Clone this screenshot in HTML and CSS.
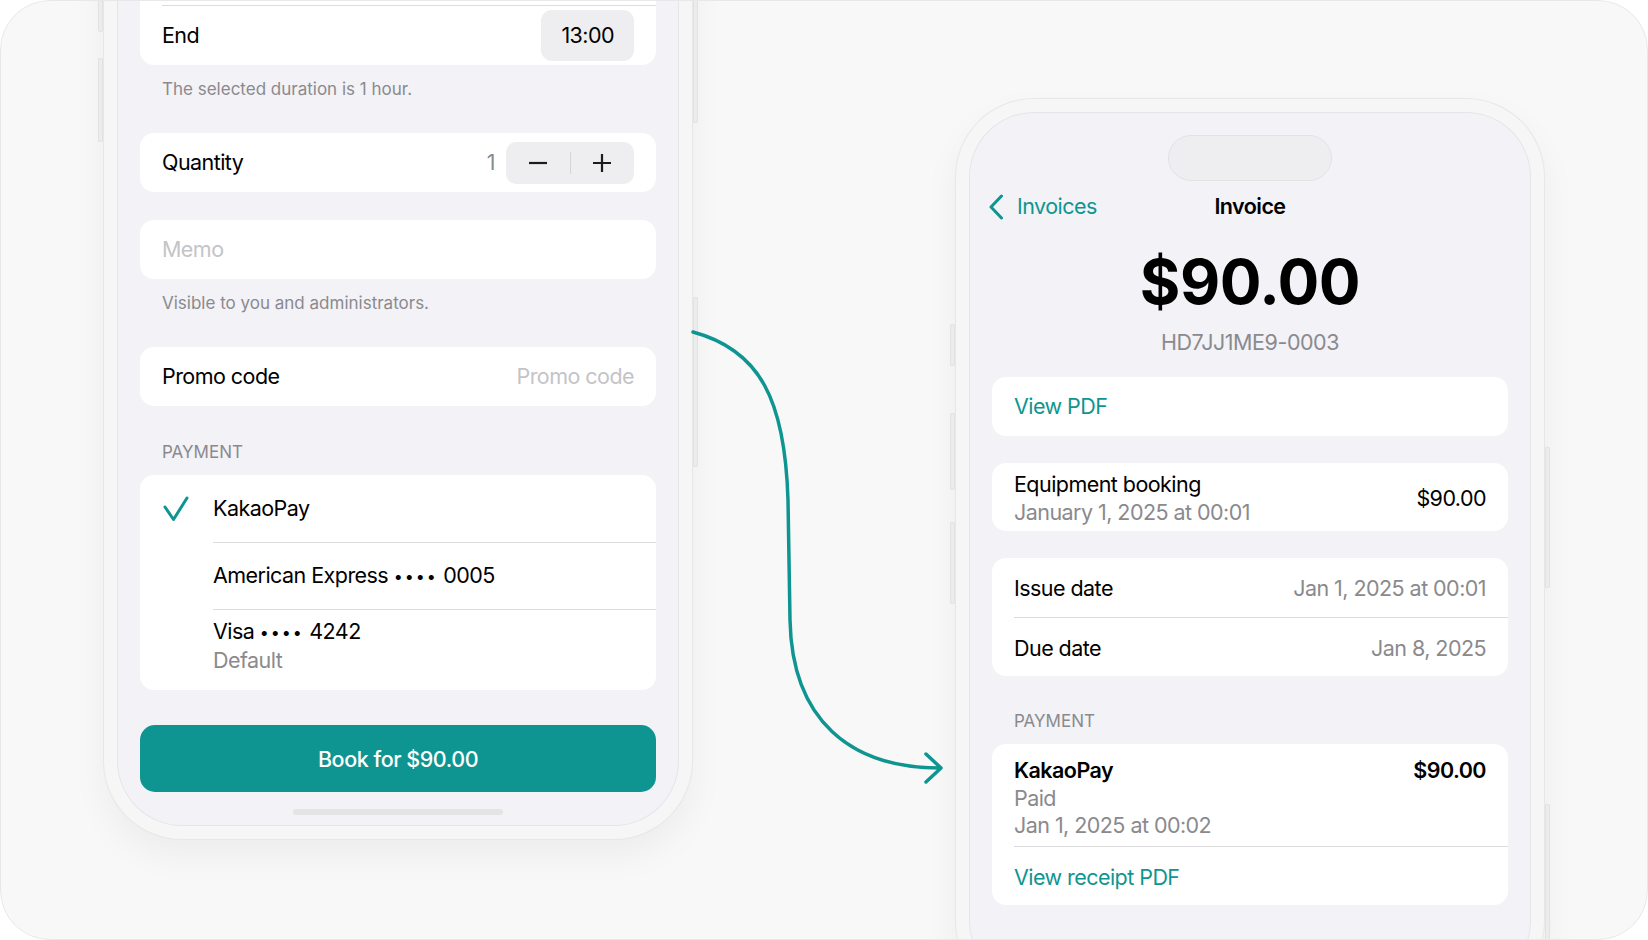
FILE: index.html
```html
<!DOCTYPE html>
<html lang="en">
<head>
    <meta charset="UTF-8">
    <meta name="viewport" content="width=device-width, initial-scale=1.0">
    <title>Booking and Invoice</title>
    <link rel="stylesheet" href="styles.css">
</head>
<body>
    <div class="frame">
        <!-- booking form -->
        <div class="phone phone-left">
            <span class="side-key on-left" style="top: 41px; height: 80px;"></span>
            <span class="side-key on-left" style="top: 147px; height: 84px;"></span>
            <span class="side-key on-right" style="top: 41px; height: 171px;"></span>
            <span class="side-key on-right" style="top: 386px; height: 170px;"></span>
            <div class="screen screen-left">
                <div class="group">
                    <div class="row row-time"></div>
                    <div class="row row-time">
                        <span class="label">End</span>
                        <span class="pill label">13:00</span>
                    </div>
                </div>
                <p class="footnote">The selected duration is 1 hour.</p>

                <div class="group">
                    <div class="row">
                        <span class="label">Quantity</span>
                        <div class="qty">
                            <span class="label muted">1</span>
                            <div class="stepper">
                                <span class="step">
                                    <svg width="20" height="20" viewBox="0 0 20 20"><path d="M1 10H19"/></svg>
                                </span>
                                <span class="step-divider"></span>
                                <span class="step">
                                    <svg width="20" height="20" viewBox="0 0 20 20"><path d="M10 1V19M1 10H19"/></svg>
                                </span>
                            </div>
                        </div>
                    </div>
                </div>
                <div class="group">
                    <div class="row">
                        <span class="label placeholder">Memo</span>
                    </div>
                </div>
                <p class="footnote">Visible to you and administrators.</p>

                <div class="group">
                    <div class="row">
                        <span class="label">Promo code</span>
                        <span class="label placeholder">Promo code</span>
                    </div>
                </div>

                <p class="section-title">Payment</p>
                <div class="group">
                    <div class="pay-row">
                        <span class="pay-check">
                            <svg width="27" height="26" viewBox="0 0 27 26"><path d="M3 11L11.5 23.5L25 2"/></svg>
                        </span>
                        <div class="pay-body"><span class="label">KakaoPay</span></div>
                    </div>
                    <div class="pay-row">
                        <span class="pay-check"></span>
                        <div class="pay-body"><span class="label">American Express <span class="dots">••••</span> 0005</span></div>
                    </div>
                    <div class="pay-row pay-row-tall">
                        <span class="pay-check"></span>
                        <div class="pay-body">
                            <span class="label">Visa <span class="dots">••••</span> 4242</span>
                            <span class="label muted">Default</span>
                        </div>
                    </div>
                </div>

                <div class="book-btn">Book for $90.00</div>
                <div class="home-bar"></div>
            </div>
        </div>

        <!-- invoice -->
        <div class="phone phone-right">
            <span class="side-key on-left" style="top: 225px; height: 42px;"></span>
            <span class="side-key on-left" style="top: 314px; height: 77px;"></span>
            <span class="side-key on-left" style="top: 423px; height: 82px;"></span>
            <span class="side-key on-right" style="top: 348px; height: 141px;"></span>
            <span class="side-key on-right" style="top: 705px; height: 200px;"></span>
            <div class="screen screen-right">
                <div class="island"></div>
                <div class="nav">
                    <span class="nav-back">
                        <svg width="16" height="26" viewBox="0 0 16 26"><path d="M13.5 2L3 13L13.5 24"/></svg>
                        <span class="label">Invoices</span>
                    </span>
                    <span class="label nav-title">Invoice</span>
                    <span></span>
                </div>
                <div class="amount">$90.00</div>
                <div class="invoice-id">HD7JJ1ME9-0003</div>

                <div class="group">
                    <div class="row">
                        <span class="label link">View PDF</span>
                    </div>
                </div>
                <div class="group">
                    <div class="row row-detail">
                        <div class="lines">
                            <span class="label">Equipment booking</span>
                            <span class="label muted">January 1, 2025 at 00:01</span>
                        </div>
                        <span class="label">$90.00</span>
                    </div>
                </div>
                <div class="group">
                    <div class="row row-first">
                        <span class="label">Issue date</span>
                        <span class="label muted">Jan 1, 2025 at 00:01</span>
                    </div>
                    <div class="row row-low">
                        <span class="label">Due date</span>
                        <span class="label muted">Jan 8, 2025</span>
                    </div>
                </div>

                <p class="section-title">Payment</p>
                <div class="group">
                    <div class="row row-payment">
                        <div class="lines">
                            <span class="label strong">KakaoPay</span>
                            <span class="label muted">Paid</span>
                            <span class="label muted">Jan 1, 2025 at 00:02</span>
                        </div>
                        <span class="label strong">$90.00</span>
                    </div>
                    <div class="row row-low">
                        <span class="label link">View receipt PDF</span>
                    </div>
                </div>
            </div>
        </div>

        <svg class="arrow" width="1648" height="940" viewBox="0 0 1648 940">
            <path d="M693 332C760 350 785 400 788 500L790 620C792 720 850 768 940 768"/>
            <path d="M926 754L941 768L926 782"/>
        </svg>
    </div>
</body>
</html>
```

FILE: styles.css
```css
* {
    box-sizing: border-box;
}
body {
    margin: 0;
    background: #ffffff;
    font-family: "Inter", "Liberation Sans", sans-serif;
    color: #000000;
}
.frame {
    position: relative;
    display: flex;
    align-items: flex-start;
    width: 1648px;
    height: 940px;
    overflow: hidden;
    background: #f8f8f8;
    border-radius: 50px;
}
.frame::after {
    content: "";
    position: absolute;
    inset: 0;
    border: 1px solid #e8e8e8;
    border-radius: 50px;
    pointer-events: none;
}

/* phone body */
.phone {
    position: relative;
    flex: none;
    width: 588px;
    padding: 14px;
    background: #f6f6f6;
    border-radius: 78px;
    box-shadow: 0 0 0 1px #e7e7e7, 0 16px 36px rgba(0, 0, 0, 0.05);
}
.phone-left {
    height: 928px;
    margin: -89px 0 0 104px;
}
.phone-right {
    height: 900px;
    margin: 99px 0 0 264px;
}
.side-key {
    position: absolute;
    width: 5px;
    background: #ececec;
    border-radius: 2px;
    box-shadow: inset 0 0 0 1px #e2e2e2;
}
.side-key.on-left {
    left: -6px;
}
.side-key.on-right {
    right: -6px;
}
.screen {
    display: flex;
    flex-direction: column;
    height: 100%;
    padding: 0 22px;
    background: #f2f2f7;
    border-radius: 64px;
    box-shadow: 0 0 0 1px #e5e5e8;
    overflow: hidden;
}
.screen-left {
    justify-content: flex-end;
    padding-bottom: 10px;
}
.screen-right {
    padding-top: 22px;
}

/* text */
.label {
    font-size: 21.5px;
    line-height: 27.5px;
    letter-spacing: -0.55px;
    white-space: nowrap;
}
.muted {
    color: #8a8a8e;
}
.placeholder {
    color: #c4c4c7;
}
.link {
    color: #0e9591;
}
.strong {
    font-weight: 600;
}
.dots {
    font-size: 16px;
    letter-spacing: 2px;
    vertical-align: 1px;
}
.footnote,
.section-title {
    flex: none;
    margin: 13px 22px 0;
    font-size: 17px;
    line-height: 22px;
    color: #8a8a8e;
}
.section-title {
    margin-top: 35px;
    text-transform: uppercase;
}

/* grouped lists */
.group {
    flex: none;
    background: #ffffff;
    border-radius: 14px;
}
.group + .group {
    margin-top: 28px;
}
.footnote + .group {
    margin-top: 33px;
}
.section-title + .group {
    margin-top: 12px;
}
.row {
    display: flex;
    align-items: center;
    justify-content: space-between;
    min-height: 59px;
    margin-left: 22px;
    padding-right: 22px;
}
.row + .row {
    border-top: 1px solid #dcdcdf;
}
.row-time {
    min-height: 60px;
}
.row-first {
    padding-top: 2px;
}
.row-low {
    padding-top: 4px;
}
.pill {
    display: flex;
    align-items: center;
    height: 51px;
    padding: 0 20px;
    background: #eeeef0;
    border-radius: 11px;
}
.qty {
    display: flex;
    align-items: center;
    gap: 11px;
}
.stepper {
    display: flex;
    align-items: center;
    height: 42px;
    background: #eeeef0;
    border-radius: 10px;
}
.step {
    display: flex;
    align-items: center;
    justify-content: center;
    width: 63.5px;
    height: 100%;
}
.step svg {
    fill: none;
    stroke: #1c1c1e;
    stroke-width: 2.2;
}
.step-divider {
    width: 1px;
    height: 22px;
    background: #d4d4d8;
}

/* payment choices */
.pay-row {
    display: flex;
    min-height: 67px;
    padding-left: 22px;
}
.pay-check {
    flex: none;
    display: flex;
    align-items: center;
    width: 51px;
}
.pay-check svg {
    fill: none;
    stroke: #0e9591;
    stroke-width: 3;
    stroke-linecap: round;
    stroke-linejoin: round;
}
.pay-body {
    flex: 1;
    display: flex;
    flex-direction: column;
    justify-content: center;
    padding-right: 22px;
}
.pay-row + .pay-row .pay-body {
    border-top: 1px solid #dcdcdf;
}
.pay-row-tall {
    min-height: 81px;
}
.pay-row-tall .pay-body {
    justify-content: flex-start;
    padding-top: 8px;
}
.book-btn {
    flex: none;
    display: flex;
    align-items: center;
    justify-content: center;
    height: 67px;
    margin-top: 35px;
    background: #0e9591;
    border-radius: 15px;
    color: #ffffff;
    font-size: 21.5px;
    font-weight: 500;
    letter-spacing: -0.45px;
}
.home-bar {
    flex: none;
    align-self: center;
    width: 210px;
    height: 6px;
    margin-top: 17px;
    background: #e4e4e4;
    border-radius: 3px;
}

/* invoice screen */
.island {
    flex: none;
    align-self: center;
    width: 164px;
    height: 46px;
    background: #eeeef0;
    border: 1px solid #e2e2e5;
    border-radius: 23px;
}
.nav {
    flex: none;
    display: grid;
    grid-template-columns: 1fr auto 1fr;
    align-items: center;
    height: 46px;
    margin: 3px -22px 0;
    padding: 0 18px;
}
.nav-back {
    display: flex;
    align-items: center;
    gap: 13px;
    color: #0e9591;
}
.nav-back svg {
    fill: none;
    stroke: #0e9591;
    stroke-width: 3;
    stroke-linecap: round;
    stroke-linejoin: round;
}
.nav-title {
    font-weight: 600;
}
.amount {
    flex: none;
    margin-top: 17px;
    font-size: 62px;
    line-height: 70px;
    font-weight: 700;
    letter-spacing: -0.5px;
    text-align: center;
}
.invoice-id {
    flex: none;
    margin-top: 12px;
    font-size: 21.5px;
    line-height: 26px;
    letter-spacing: -0.45px;
    color: #8a8a8e;
    text-align: center;
}
.invoice-id + .group {
    margin-top: 22px;
}
.screen-right .group + .group {
    margin-top: 27px;
}
.screen-right .section-title {
    margin-top: 34px;
}
.lines {
    display: flex;
    flex-direction: column;
}
.row-detail {
    padding-top: 8px;
    padding-bottom: 5px;
}
.row-payment {
    align-items: flex-start;
    padding-top: 13px;
    padding-bottom: 6px;
}

.arrow {
    position: absolute;
    left: 0;
    top: 0;
    fill: none;
    stroke: #0e9591;
    stroke-width: 3.5;
    stroke-linecap: round;
    stroke-linejoin: round;
    pointer-events: none;
}
```
